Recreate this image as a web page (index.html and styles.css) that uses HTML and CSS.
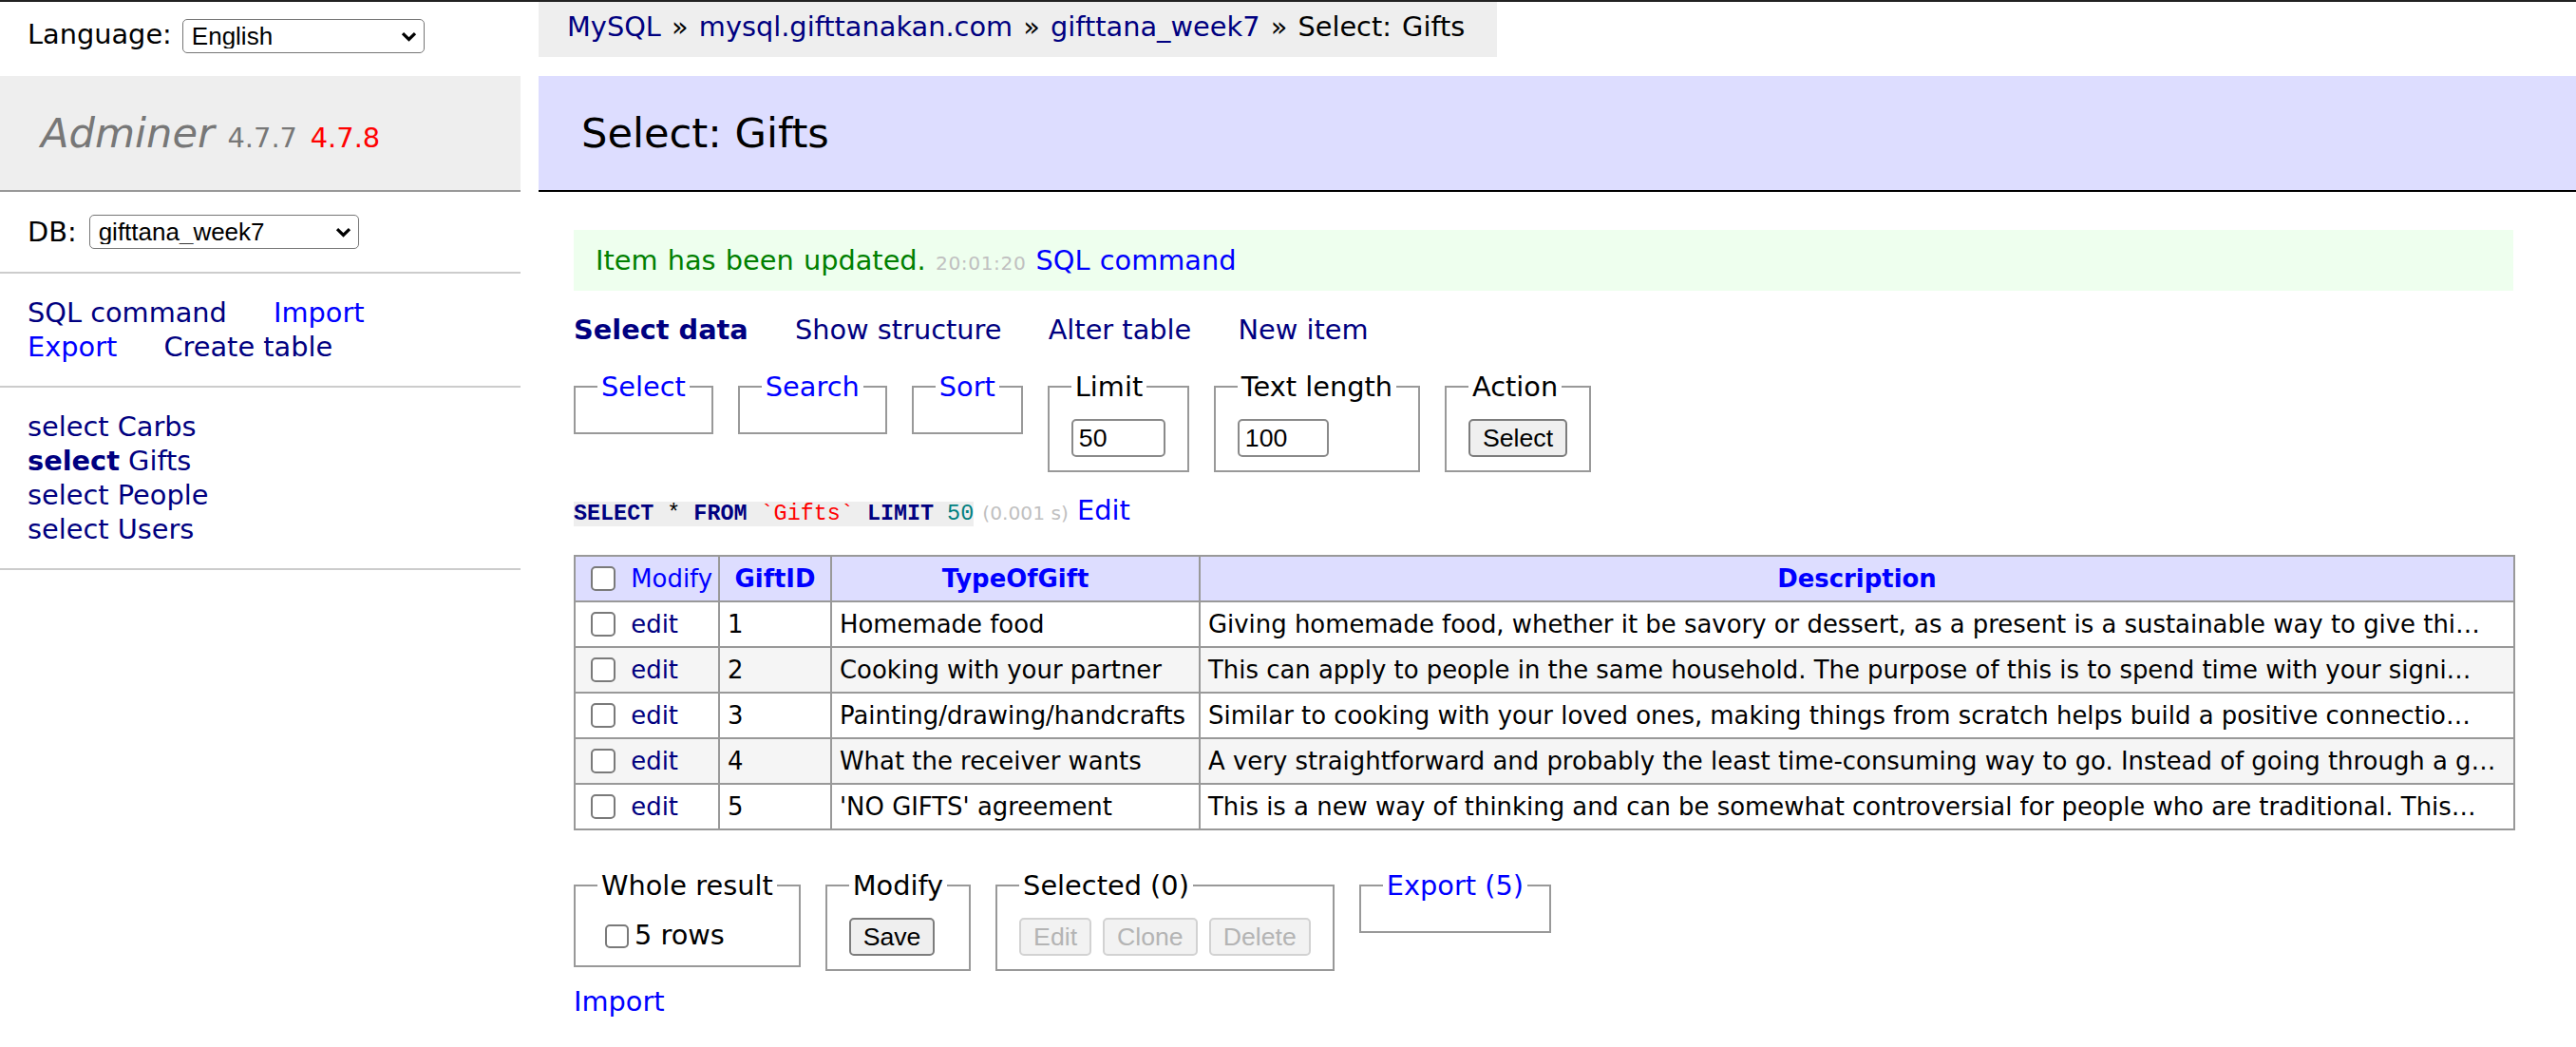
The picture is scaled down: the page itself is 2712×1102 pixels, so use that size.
FILE: index.html
```html
<!DOCTYPE html>
<html lang="en">
<head>
<meta charset="utf-8">
<title>Select: Gifts - gifttana_week7 - Adminer</title>
<link rel="stylesheet" href="styles.css">
</head>
<body>
<div class="page">
  <aside class="menu">
    <form class="lang">Language:<span class="sel sel-lang"><select class="dropdown dd-lang"><option>English</option></select><svg class="chev" viewBox="0 0 17 11"><path d="M2 2.2 L8.5 8.5 L15 2.2" fill="none" stroke="#000" stroke-width="3.2"/></svg></span></form>
    <h1 class="logo"><a href="#" class="brand">Adminer</a> <span class="version">4.7.7</span> <a href="#" class="newver">4.7.8</a></h1>
    <p class="dbs">DB:<span class="sel sel-db"><select class="dropdown dd-db"><option>gifttana_week7</option></select><svg class="chev" viewBox="0 0 17 11"><path d="M2 2.2 L8.5 8.5 L15 2.2" fill="none" stroke="#000" stroke-width="3.2"/></svg></span></p>
    <p class="menu-links"><a href="#" class="n">SQL command</a> <a href="#" class="b">Import</a> <a href="#" class="b">Export</a> <a href="#" class="n">Create table</a></p>
    <ul class="tables">
      <li><a href="#" class="n">select</a> <a href="#" class="n">Carbs</a></li>
      <li><a href="#" class="n active">select</a> <a href="#" class="n">Gifts</a></li>
      <li><a href="#" class="n">select</a> <a href="#" class="n">People</a></li>
      <li><a href="#" class="n">select</a> <a href="#" class="n">Users</a></li>
    </ul>
  </aside>
  <main class="main">
    <div class="breadcrumb"><a href="#" class="n">MySQL</a> » <a href="#" class="n">mysql.gifttanakan.com</a> » <a href="#" class="n">gifttana_week7</a> » Select: Gifts</div>
    <h2 class="title">Select: Gifts</h2>
    <div class="content">
      <div class="message">Item has been updated. <span class="time">20:01:20</span> <a href="#" class="b">SQL command</a></div>
      <p class="tabs"><a href="#" class="n active">Select data</a> <a href="#" class="n">Show structure</a> <a href="#" class="n">Alter table</a> <a href="#" class="n">New item</a></p>
      <form class="select-form">
        <div class="fieldsets">
          <fieldset><legend><a href="#" class="b">Select</a></legend></fieldset>
          <fieldset><legend><a href="#" class="b">Search</a></legend></fieldset>
          <fieldset><legend><a href="#" class="b">Sort</a></legend></fieldset>
          <fieldset><legend>Limit</legend><input type="number" class="field field-limit" value="50"></fieldset>
          <fieldset><legend>Text length</legend><input type="number" class="field field-len" value="100"></fieldset>
          <fieldset><legend>Action</legend><input type="submit" class="btn" value="Select"></fieldset>
        </div>
        <p class="sql"><code class="sqlcode"><b class="kw">SELECT</b> * <b class="kw">FROM</b> <span class="bac">`Gifts`</span> <b class="kw">LIMIT</b> <span class="numlit">50</span></code> <span class="time">(0.001 s)</span> <a href="#" class="b">Edit</a></p>
        <table class="data">
          <colgroup><col class="c1"><col class="c2"><col class="c3"><col class="c4"></colgroup>
          <thead>
            <tr><td class="head-first"><input type="checkbox" class="cb"> <a href="#" class="b">Modify</a></td><th><a href="#" class="b">GiftID</a></th><th><a href="#" class="b">TypeOfGift</a></th><th><a href="#" class="b">Description</a></th></tr>
          </thead>
          <tbody>
            <tr><td><input type="checkbox" class="cb"> <a href="#" class="n">edit</a></td><td>1</td><td>Homemade food</td><td>Giving homemade food, whether it be savory or dessert, as a present is a sustainable way to give thi…</td></tr>
            <tr><td><input type="checkbox" class="cb"> <a href="#" class="n">edit</a></td><td>2</td><td>Cooking with your partner</td><td>This can apply to people in the same household. The purpose of this is to spend time with your signi…</td></tr>
            <tr><td><input type="checkbox" class="cb"> <a href="#" class="n">edit</a></td><td>3</td><td>Painting/drawing/handcrafts</td><td>Similar to cooking with your loved ones, making things from scratch helps build a positive connectio…</td></tr>
            <tr><td><input type="checkbox" class="cb"> <a href="#" class="n">edit</a></td><td>4</td><td>What the receiver wants</td><td>A very straightforward and probably the least time-consuming way to go. Instead of going through a g…</td></tr>
            <tr><td><input type="checkbox" class="cb"> <a href="#" class="n">edit</a></td><td>5</td><td>'NO GIFTS' agreement</td><td>This is a new way of thinking and can be somewhat controversial for people who are traditional. This…</td></tr>
          </tbody>
        </table>
        <div class="footer">
          <fieldset><legend>Whole result</legend><label><input type="checkbox" class="cb cb-all">5 rows</label></fieldset>
          <fieldset><legend>Modify</legend><input type="submit" class="btn" value="Save"></fieldset>
          <fieldset><legend>Selected (0)</legend><div class="btnrow"><input type="submit" class="btn" value="Edit" disabled><input type="submit" class="btn" value="Clone" disabled><input type="submit" class="btn" value="Delete" disabled></div></fieldset>
          <fieldset><legend><a href="#" class="b">Export (5)</a></legend></fieldset>
        </div>
        <div class="import"><a href="#" class="b">Import</a></div>
      </form>
    </div>
  </main>
</div>
</body>
</html>
```

FILE: styles.css
```css
* { box-sizing: border-box; }
html, body { margin: 0; padding: 0; }
body {
  font: 28.8px/36px "DejaVu Sans", Verdana, sans-serif;
  color: #000;
  background: #fff;
  border-top: 2px solid #222;
}
a { text-decoration: none; }
a.b, a.b:link, a.b:visited { color: #0000ff; }
a.n, a.n:link, a.n:visited { color: #000080; }
.active { font-weight: bold; }

.page { display: flex; align-items: flex-start; }

/* ---------- sidebar ---------- */
.menu { width: 548px; flex: none; }
.lang {
  height: 78px;
  margin: 0;
  padding: 8px 29px 0;
  line-height: 52px;
  white-space: nowrap;
}
.sel { display: inline-flex; align-items: center; vertical-align: middle; }
.sel-lang { margin-left: 11px; }
.sel-db { margin-left: 13px; vertical-align: top; }
.dropdown {
  -webkit-appearance: none;
  appearance: none;
  font: 26px/1 "Liberation Sans", Arial, sans-serif;
  color: #000;
  background: #fff;
  border: 1px solid #767676;
  border-radius: 5px;
  height: 36px;
  margin: 0;
  padding: 0 34px 0 9px;
}
.dd-lang { width: 255px; }
.dd-db { width: 284px; }
.chev { width: 17px; height: 11px; margin-left: -25px; pointer-events: none; flex: none; }

.logo {
  margin: 0;
  padding: 33px 43px;
  font-size: 43.2px;
  line-height: 54px;
  font-weight: normal;
  color: #777;
  background: #eee;
  border-bottom: 2px solid #999;
  white-space: nowrap;
}
.logo .brand, .logo .brand:visited { color: #777; font-style: italic; }
.logo .version { color: #777; font-size: 28.9px; line-height: 1; }
.logo .newver, .logo .newver:visited { color: #f00; font-size: 28.9px; line-height: 1; }

.dbs {
  margin: 0;
  padding: 24px 29px;
  border-bottom: 2px solid #ccc;
  white-space: nowrap;
}
.menu-links {
  margin: 0;
  padding: 23px 29px;
  border-bottom: 2px solid #ccc;
}
.menu-links a { white-space: nowrap; margin-right: 40px; }
.tables {
  margin: 0;
  padding: 23px 29px;
  list-style: none;
  border-bottom: 2px solid #ccc;
  white-space: nowrap;
}

/* ---------- main ---------- */
.main { flex: 1; min-width: 0; margin-left: 19px; }
.breadcrumb {
  width: fit-content;
  height: 58px;
  line-height: 52px;
  padding: 0 34px 0 30px;
  word-spacing: 2px;
  background: #eee;
  white-space: nowrap;
}
.title {
  margin: 20px 0 0;
  padding: 33px 45px;
  font-size: 43.2px;
  line-height: 54px;
  font-weight: normal;
  background: #ddf;
  border-bottom: 2px solid #000;
}
.content { padding: 0 66px 0 37px; }

.message {
  margin: 40px 0 0;
  padding: 14px 23px;
  color: green;
  background: #efe;
  word-spacing: 1px;
}
.time { color: silver; font-size: 20.2px; line-height: 1; }
.message .time { letter-spacing: 0.6px; }

.tabs { margin: 23px 0 0; }
.tabs a { white-space: nowrap; margin-right: 40px; }

.select-form { margin: 0; }
.fieldsets, .footer { display: flex; gap: 26px; align-items: flex-start; }
.fieldsets { margin-top: 24px; }
fieldset {
  margin: 0;
  padding: 16px 23px 14px;
  border: 2px solid #999;
  min-width: 0;
  min-inline-size: 0;
}
legend { padding: 0 4px; line-height: 36px; }

.field {
  font: 26.67px/1 "Liberation Sans", Arial, sans-serif;
  height: 40px;
  margin: 0;
  padding: 0 6px;
  border: 2px solid #8a8a8a;
  border-radius: 5px;
  background: #fff;
  color: #000;
  vertical-align: middle;
  -moz-appearance: textfield;
}
.field::-webkit-inner-spin-button,
.field::-webkit-outer-spin-button { -webkit-appearance: none; margin: 0; }
.field-limit { width: 99px; }
.field-len { width: 96px; }

.btn {
  font: 26.67px/1 "Liberation Sans", Arial, sans-serif;
  height: 40px;
  margin: 0;
  padding: 0 13px;
  border: 2px solid #7d7d7d;
  border-radius: 5px;
  background: #efefef;
  color: #000;
  vertical-align: middle;
}
.btn:disabled { color: #b4b4b4; border-color: #d2d2d2; background: #f2f2f2; }
.btnrow { display: flex; gap: 12px; }

.sql { margin: 22px 0 0; white-space: nowrap; }
.sqlcode { font: 23.4px/1 "Liberation Mono", "Courier New", monospace; background: #eee; }
.kw { color: #000080; font-weight: bold; }
.bac { color: red; }
.numlit { color: #007f7f; }

.data {
  margin-top: 29px;
  border-collapse: collapse;
  table-layout: fixed;
  width: 2042px;
  font-size: 25.92px;
  line-height: 32px;
}
.c1 { width: 152px; }
.c2 { width: 118px; }
.c3 { width: 388px; }
.c4 { width: 1384px; }
.data td, .data th {
  border: 2px solid #999;
  padding: 7px 8px;
  white-space: nowrap;
  overflow: hidden;
  text-align: left;
}
.data thead th { text-align: center; padding: 7px 13px; background: #ddf; font-weight: bold; }
.data thead td { background: #ddf; }
.data tbody tr:nth-child(2n) { background: #f5f5f5; }

.cb {
  -webkit-appearance: none;
  appearance: none;
  width: 26px;
  height: 26px;
  margin: 0 8px 0 8px;
  border: 2px solid #7a7a7a;
  border-radius: 5px;
  background: #fff;
  vertical-align: -4px;
}
.cb-all { width: 25px; height: 25px; margin: 0 6px 0 8px; }

.footer { margin-top: 40px; }
.import { margin-top: 14px; }
```
